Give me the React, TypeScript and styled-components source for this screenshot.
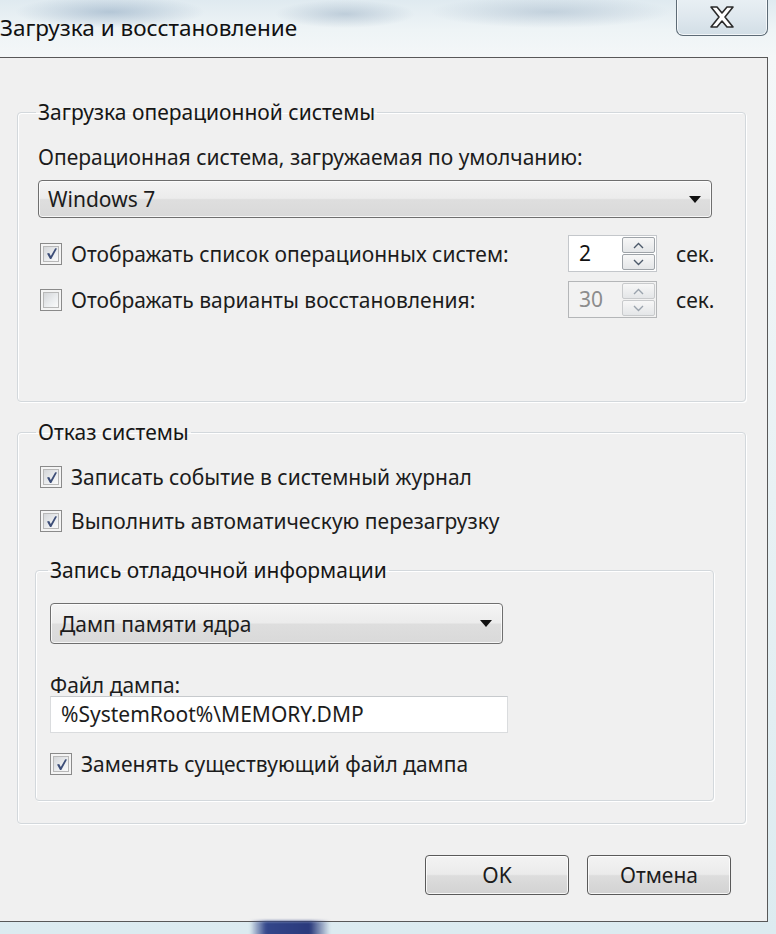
import React from "react";
import styled, { createGlobalStyle } from "styled-components";

const GlobalStyle = createGlobalStyle`
  html, body {
    margin: 0;
    padding: 0;
    background: #e4eff3;
  }
  body {
    font-family: "Noto Sans", "Open Sans", Arial, sans-serif;
    color: #1c1c1c;
  }
`;

const Window = styled.div`
  width: 776px;
  height: 934px;
  overflow: hidden;
  display: flex;
  flex-direction: column;
  background:
    radial-gradient(ellipse 95px 16px at 110px 12px, rgba(120, 150, 180, 0.45), transparent),
    radial-gradient(ellipse 70px 14px at 345px 14px, rgba(130, 155, 180, 0.4), transparent),
    radial-gradient(ellipse 120px 16px at 550px 12px, rgba(130, 155, 180, 0.35), transparent),
    linear-gradient(180deg, #dfeaf0 0px, #eef4f6 30px, #f4f7f8 57px, #dcebf0 100%);
`;

const TitleBar = styled.div`
  height: 57px;
  display: flex;
  align-items: flex-start;
  flex-shrink: 0;
`;

const Title = styled.div`
  flex: 1;
  font-size: 22.5px;
  line-height: 28px;
  margin-top: 14px;
  color: #111;
  white-space: nowrap;
`;

const CloseButton = styled.div`
  width: 90px;
  height: 37px;
  margin-top: -2px;
  margin-right: 8px;
  border: 1px solid #5d6b76;
  border-top: none;
  border-radius: 0 0 7px 7px;
  background: linear-gradient(180deg, #e9f0f4 0%, #dfe8ee 50%, #d2dee6 100%);
  box-shadow: inset 0 0 0 1px rgba(255, 255, 255, 0.7);
  display: flex;
  align-items: center;
  justify-content: center;
`;

const Body = styled.div`
  flex: 1;
  margin-right: 8px;
  margin-bottom: 12px;
  background: #f0f0f0;
  border: 1px solid #585858;
  border-left: none;
  padding: 41px 21px 0 17px;
  display: flex;
  flex-direction: column;
`;

const Group = styled.fieldset<{ $gap?: number; $bottom: number; $top: number }>`
  margin: ${(p) => p.$gap ?? 0}px 0 0 0;
  padding: ${(p) => p.$top}px 31px ${(p) => p.$bottom}px 20px;
  border: 1px solid #d3d8dc;
  border-radius: 4px;
  box-shadow: 1px 1px 0 #ffffff, inset 1px 1px 0 #ffffff;
  min-width: 0;
`;

const SubGroup = styled(Group)`
  margin-left: -3px;
  margin-right: 0;
  padding-left: 14px;
  padding-right: 10px;
`;

const Legend = styled.legend`
  font-size: 21px;
  line-height: 26px;
  padding: 0 2px;
  margin-left: -2px;
  color: #161616;
`;

const FieldLabel = styled.div<{ $gap?: number }>`
  font-size: 21px;
  line-height: 22px;
  margin-top: ${(p) => p.$gap ?? 0}px;
  white-space: nowrap;
`;

const TopLabel = styled(FieldLabel)`
  line-height: 26px;
`;

const ComboBox = styled.div<{ $width?: number; $gap: number; $height: number }>`
  margin-top: ${(p) => p.$gap}px;
  height: ${(p) => p.$height}px;
  width: ${(p) => (p.$width ? `${p.$width}px` : "auto")};
  box-sizing: border-box;
  margin-right: ${(p) => (p.$width ? 0 : 2)}px;
  border: 1px solid #6f6f6f;
  border-radius: 4px;
  background: linear-gradient(180deg, #f4f4f4 0%, #ececec 48%, #dedede 52%, #d9d9d9 100%);
  box-shadow: inset 0 0 0 1px rgba(255, 255, 255, 0.75);
  display: flex;
  align-items: center;
  padding: 0 10px 0 9px;
`;

const ComboText = styled.span`
  flex: 1;
  font-size: 21px;
  white-space: nowrap;
`;

const ComboArrow = styled.span`
  width: 0;
  height: 0;
  border-left: 6px solid transparent;
  border-right: 6px solid transparent;
  border-top: 7px solid #111;
`;

const OptionRow = styled.div<{ $gap: number }>`
  display: flex;
  align-items: center;
  height: 37px;
  margin-top: ${(p) => p.$gap}px;
`;

const CheckRow = styled.div<{ $gap: number; $indent?: number }>`
  display: flex;
  align-items: center;
  height: 30px;
  margin-top: ${(p) => p.$gap}px;
  margin-left: ${(p) => p.$indent ?? 2}px;
  flex: 1;
`;

const CheckBox = styled.span`
  width: 22px;
  height: 22px;
  box-sizing: border-box;
  border: 1px solid #8a8a8a;
  background: #f4f4f4;
  padding: 2px;
  flex-shrink: 0;
  display: flex;
`;

const CheckInner = styled.span`
  flex: 1;
  border: 1px solid #b8b8b8;
  background: linear-gradient(135deg, #d4d6d9 0%, #eceef0 60%, #fafafa 100%);
  display: flex;
  align-items: center;
  justify-content: center;
`;

const CheckLabel = styled.span`
  font-size: 21px;
  margin-left: 9px;
  white-space: nowrap;
`;

const Spinner = styled.div<{ $disabled?: boolean }>`
  width: 89px;
  height: 37px;
  box-sizing: border-box;
  border: 1px solid ${(p) => (p.$disabled ? "#b4b6b8" : "#c4c7cb")};
  background: ${(p) => (p.$disabled ? "#f2f2f2" : "#ffffff")};
  display: flex;
  flex-shrink: 0;
`;

const SpinValue = styled.span<{ $disabled?: boolean }>`
  flex: 1;
  font-size: 21px;
  line-height: 35px;
  padding-left: 10px;
  color: ${(p) => (p.$disabled ? "#8c8c8c" : "#111")};
`;

const SpinButtons = styled.div`
  width: 33px;
  display: flex;
  flex-direction: column;
  padding: 1px;
  gap: 1px;
`;

const SpinButton = styled.div<{ $disabled?: boolean }>`
  flex: 1;
  border: 1px solid ${(p) => (p.$disabled ? "#c8cacc" : "#9ea3a8")};
  border-radius: 2px;
  background: linear-gradient(180deg, #f7f7f7, #e4e6e8);
  display: flex;
  align-items: center;
  justify-content: center;
`;

const Unit = styled.span`
  font-size: 21px;
  margin-left: 19px;
  width: 38px;
  white-space: nowrap;
`;

const TextField = styled.div`
  width: 458px;
  height: 37px;
  box-sizing: border-box;
  border: 1px solid #dadcde;
  border-top-color: #c7cacd;
  background: #ffffff;
  font-size: 21px;
  line-height: 35px;
  padding-left: 10px;
  white-space: nowrap;
`;

const ButtonRow = styled.div`
  display: flex;
  justify-content: flex-end;
  gap: 18px;
  margin-top: 31px;
  padding-right: 15px;
`;

const DialogButton = styled.div`
  width: 144px;
  height: 40px;
  box-sizing: border-box;
  border: 1px solid #5a5a5a;
  border-radius: 4px;
  background: linear-gradient(180deg, #f3f3f3 0%, #ebebeb 48%, #dddddd 52%, #d2d2d2 100%);
  box-shadow: inset 0 0 0 1px rgba(255, 255, 255, 0.8);
  font-size: 21px;
  display: flex;
  align-items: center;
  justify-content: center;
`;

const BottomGlass = styled.div`
  position: absolute;
  left: 250px;
  top: 921px;
  width: 80px;
  height: 16px;
  background: linear-gradient(90deg, transparent, #33468a 20%, #2a3a7c 75%, transparent);
  filter: blur(1.5px);
`;

const Frame = styled.div`
  position: relative;
  width: 776px;
  height: 934px;
`;

const CheckMark = () => (
  <svg width="13" height="13" viewBox="0 0 13 13">
    <path
      d="M2 6.5 L4.2 6 L5.8 9 L10.2 1.2 L12 1.6 L6.3 12 L5 12 Z"
      fill="#3d4e78"
    />
  </svg>
);

const Check = ({ checked }: { checked: boolean }) => (
  <CheckBox>
    <CheckInner>{checked && <CheckMark />}</CheckInner>
  </CheckBox>
);

const Arrow = ({ up, disabled }: { up?: boolean; disabled?: boolean }) => (
  <svg width="11" height="7" viewBox="0 0 11 7">
    <path
      d={up ? "M1 6 L5.5 1.5 L10 6" : "M1 1 L5.5 5.5 L10 1"}
      fill="none"
      stroke={disabled ? "#9aa3ad" : "#4d5a6b"}
      strokeWidth="1.4"
    />
  </svg>
);

const SpinBox = ({ value, disabled }: { value: string; disabled?: boolean }) => (
  <Spinner $disabled={disabled}>
    <SpinValue $disabled={disabled}>{value}</SpinValue>
    <SpinButtons>
      <SpinButton $disabled={disabled}>
        <Arrow up disabled={disabled} />
      </SpinButton>
      <SpinButton $disabled={disabled}>
        <Arrow disabled={disabled} />
      </SpinButton>
    </SpinButtons>
  </Spinner>
);

const App = () => {
  return (
    <Frame>
      <GlobalStyle />
      <Window>
        <TitleBar>
          <Title>Загрузка и восстановление</Title>
          <CloseButton>
            <svg width="28" height="24" viewBox="0 0 28 24">
              <path
                d="M3 2 L9 2 L14 8 L19 2 L25 2 L17 12 L25 22 L19 22 L14 16 L9 22 L3 22 L11 12 Z"
                fill="#ffffff"
                stroke="#2b2b2b"
                strokeWidth="1.6"
                strokeLinejoin="round"
              />
            </svg>
          </CloseButton>
        </TitleBar>

        <Body>
          <Group $top={19} $bottom={83}>
            <Legend>Загрузка операционной системы</Legend>
            <TopLabel>Операционная система, загружаемая по умолчанию:</TopLabel>
            <ComboBox $gap={10} $height={38}>
              <ComboText>Windows 7</ComboText>
              <ComboArrow />
            </ComboBox>
            <OptionRow $gap={17}>
              <CheckRow $gap={0}>
                <Check checked />
                <CheckLabel>Отображать список операционных систем:</CheckLabel>
              </CheckRow>
              <SpinBox value="2" />
              <Unit>сек.</Unit>
            </OptionRow>
            <OptionRow $gap={9}>
              <CheckRow $gap={0}>
                <Check checked={false} />
                <CheckLabel>Отображать варианты восстановления:</CheckLabel>
              </CheckRow>
              <SpinBox value="30" disabled />
              <Unit>сек.</Unit>
            </OptionRow>
          </Group>

          <Group $gap={17} $top={17} $bottom={22}>
            <Legend>Отказ системы</Legend>
            <CheckRow $gap={0}>
              <Check checked />
              <CheckLabel>Записать событие в системный журнал</CheckLabel>
            </CheckRow>
            <CheckRow $gap={14}>
              <Check checked />
              <CheckLabel>Выполнить автоматическую перезагрузку</CheckLabel>
            </CheckRow>

            <SubGroup $gap={21} $top={20} $bottom={21}>
              <Legend>Запись отладочной информации</Legend>
              <ComboBox $gap={0} $height={41} $width={453}>
                <ComboText>Дамп памяти ядра</ComboText>
                <ComboArrow />
              </ComboBox>
              <FieldLabel $gap={30}>Файл дампа:</FieldLabel>
              <TextField>%SystemRoot%\MEMORY.DMP</TextField>
              <CheckRow $gap={16} $indent={0}>
                <Check checked />
                <CheckLabel>Заменять существующий файл дампа</CheckLabel>
              </CheckRow>
            </SubGroup>
          </Group>

          <ButtonRow>
            <DialogButton>OK</DialogButton>
            <DialogButton>Отмена</DialogButton>
          </ButtonRow>
        </Body>
      </Window>
      <BottomGlass />
    </Frame>
  );
};

export default App;
